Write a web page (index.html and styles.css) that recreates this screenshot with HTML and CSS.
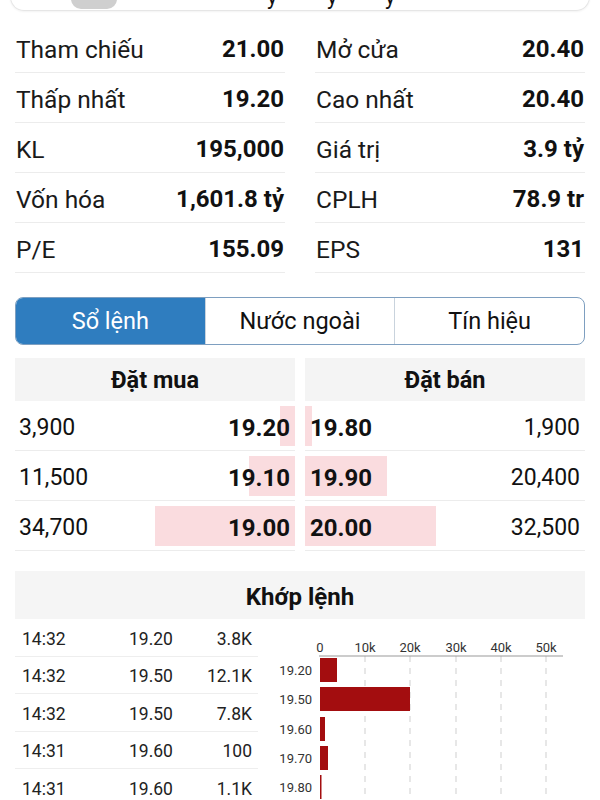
FILE: index.html
```html
<!DOCTYPE html>
<html lang="vi">
<head>
    <meta charset="UTF-8">
    <meta name="viewport" content="width=device-width, initial-scale=1">
    <link rel="stylesheet" href="styles.css">
    <title>Chi tiết cổ phiếu</title>
</head>
<body>
<div class="top-card">
    <span class="pill"></span>
    <span class="tail t1">y</span>
    <span class="tail t2">y</span>
    <span class="tail t3">y</span>
</div>

<div class="page">
    <!-- thong tin co ban -->
    <div class="stats">
        <div class="stat"><span>Tham chiếu</span><b>21.00</b></div>
        <div class="stat"><span>Mở cửa</span><b>20.40</b></div>
        <div class="stat"><span>Thấp nhất</span><b>19.20</b></div>
        <div class="stat"><span>Cao nhất</span><b>20.40</b></div>
        <div class="stat"><span>KL</span><b>195,000</b></div>
        <div class="stat"><span>Giá trị</span><b>3.9 tỷ</b></div>
        <div class="stat"><span>Vốn hóa</span><b>1,601.8 tỷ</b></div>
        <div class="stat"><span>CPLH</span><b>78.9 tr</b></div>
        <div class="stat"><span>P/E</span><b>155.09</b></div>
        <div class="stat"><span>EPS</span><b>131</b></div>
    </div>

    <div class="tabs">
        <div class="tab active">Sổ lệnh</div>
        <div class="tab">Nước ngoài</div>
        <div class="tab">Tín hiệu</div>
    </div>

    <!-- so lenh -->
    <div class="book">
        <div class="side">
            <div class="side-head">Đặt mua</div>
            <div class="order buy"><i class="bar" style="width:15px"></i><span>3,900</span><b>19.20</b></div>
            <div class="order buy"><i class="bar" style="width:46px"></i><span>11,500</span><b>19.10</b></div>
            <div class="order buy"><i class="bar" style="width:140px"></i><span>34,700</span><b>19.00</b></div>
        </div>
        <div class="side">
            <div class="side-head">Đặt bán</div>
            <div class="order sell"><i class="bar" style="width:7px"></i><b>19.80</b><span>1,900</span></div>
            <div class="order sell"><i class="bar" style="width:82px"></i><b>19.90</b><span>20,400</span></div>
            <div class="order sell"><i class="bar" style="width:131px"></i><b>20.00</b><span>32,500</span></div>
        </div>
    </div>

    <div class="match-head">Khớp lệnh</div>
    <div class="match">
        <div class="trades">
            <div class="trade"><span class="time">14:32</span><span class="price">19.20</span><span class="vol">3.8K</span></div>
            <div class="trade"><span class="time">14:32</span><span class="price">19.50</span><span class="vol">12.1K</span></div>
            <div class="trade"><span class="time">14:32</span><span class="price">19.50</span><span class="vol">7.8K</span></div>
            <div class="trade"><span class="time">14:31</span><span class="price">19.60</span><span class="vol">100</span></div>
            <div class="trade"><span class="time">14:31</span><span class="price">19.60</span><span class="vol">1.1K</span></div>
        </div>
        <svg class="chart" width="325" height="180" viewBox="0 0 325 180">
            <g class="grid">
                <line x1="105" y1="37" x2="105" y2="180"/>
                <line x1="150" y1="37" x2="150" y2="180"/>
                <line x1="196" y1="37" x2="196" y2="180"/>
                <line x1="241" y1="37" x2="241" y2="180"/>
                <line x1="286" y1="37" x2="286" y2="180"/>
            </g>
            <line x1="59" y1="37" x2="303" y2="37" stroke="#9a9a9a" stroke-width="1.2"/>
            <g class="ticks" text-anchor="middle">
                <text x="60" y="33">0</text>
                <text x="105" y="33">10k</text>
                <text x="150" y="33">20k</text>
                <text x="196" y="33">30k</text>
                <text x="241" y="33">40k</text>
                <text x="286" y="33">50k</text>
            </g>
            <g fill="#a30d0f">
                <rect x="60" y="39" width="17" height="24"/>
                <rect x="60" y="68" width="90" height="24"/>
                <rect x="60" y="98" width="5" height="24"/>
                <rect x="60" y="127" width="8" height="24"/>
                <rect x="60" y="156" width="1.5" height="24"/>
            </g>
            <g class="ticks" text-anchor="end">
                <text x="52" y="56">19.20</text>
                <text x="52" y="85">19.50</text>
                <text x="52" y="115">19.60</text>
                <text x="52" y="144">19.70</text>
                <text x="52" y="173">19.80</text>
            </g>
        </svg>
    </div>
</div>
</body>
</html>
```

FILE: styles.css
```css
* {
    box-sizing: border-box;
}
body {
    margin: 0;
    background: #fff;
    font-family: Roboto, "Noto Sans", sans-serif;
    color: #111;
    overflow: hidden;
}

/* the card that is scrolled off the top */
.top-card {
    position: relative;
    margin: -39px 10px 0;
    height: 50px;
    border: 1px solid #e6e6e6;
    border-top: none;
    border-radius: 0 0 14px 14px;
    box-shadow: 0 1px 2px rgba(0,0,0,0.05);
    overflow: hidden;
}
.pill {
    position: absolute;
    left: 60px;
    bottom: 1px;
    width: 46px;
    height: 30px;
    border-radius: 10px;
    background: #cfcfcf;
}
.tail {
    position: absolute;
    bottom: 2px;
    font-size: 22px;
    line-height: 22px;
}
.t1 {left: 256px;}
.t2 {left: 316px;}
.t3 {left: 374px;}

.page {
    padding: 12px 15px 0;
}

.stats {
    display: grid;
    grid-template-columns: 1fr 1fr;
    column-gap: 30px;
}
.stat {
    display: flex;
    justify-content: space-between;
    align-items: center;
    height: 50px;
    border-bottom: 1px solid #ececec;
    font-size: 24.5px;
    color: #1a1a1a;
    padding: 3px 1px 0;
}
.stat b {
    font-weight: 700;
    font-size: 24px;
    color: #111;
}

.tabs {
    display: flex;
    margin-top: 24px;
    height: 48px;
    border: 1.5px solid #7e9fc0;
    border-radius: 8px;
    overflow: hidden;
}
.tab {
    flex: 1;
    display: flex;
    align-items: center;
    justify-content: center;
    font-size: 23.5px;
    border-left: 1px solid #c9d3dd;
}
.tab:first-child {border-left: none;}
.tab.active {
    background: #2f7dbf;
    color: #fff;
}

.book {
    display: flex;
    gap: 10px;
    margin-top: 13px;
}
.side {flex: 1;}
.side-head {
    height: 43px;
    background: #f4f4f4;
    display: flex;
    align-items: center;
    justify-content: center;
    font-size: 23.5px;
    font-weight: 700;
}
.order {
    position: relative;
    display: flex;
    justify-content: space-between;
    align-items: center;
    height: 50px;
    border-bottom: 1px solid #ececec;
    font-size: 23px;
    padding: 4px 5px 0 4px;
}
.order b {font-size: 24px;}
.order span, .order b {position: relative;}
.order .bar {
    position: absolute;
    top: 5px;
    height: 40px;
    background: #fadcdf;
}
.buy .bar {right: 0;}
.sell .bar {left: 0;}
.sell {padding: 4px 5px 0;}

.match-head {
    margin-top: 20px;
    height: 48px;
    padding-top: 3px;
    background: #f5f5f5;
    display: flex;
    align-items: center;
    justify-content: center;
    font-size: 24px;
    font-weight: 700;
}
.match {
    display: flex;
}
.trades {
    width: 243px;
}
.trade {
    display: flex;
    align-items: center;
    height: 37.5px;
    padding-top: 3px;
    border-bottom: 1px solid #eeeeee;
    font-size: 17.5px;
    color: #222;
}
.trade .time {width: 114px; padding-left: 7px;}
.trade .price {width: 64px;}
.trade .vol {flex: 1; text-align: right; padding-right: 6px;}

.chart {
    margin-left: 2px;
    display: block;
}
.chart .grid line {
    stroke: #cfcfcf;
    stroke-width: 1;
    stroke-dasharray: 6 6;
}
.chart .ticks {
    font-family: Roboto, sans-serif;
    font-size: 13px;
    fill: #333;
}
```
